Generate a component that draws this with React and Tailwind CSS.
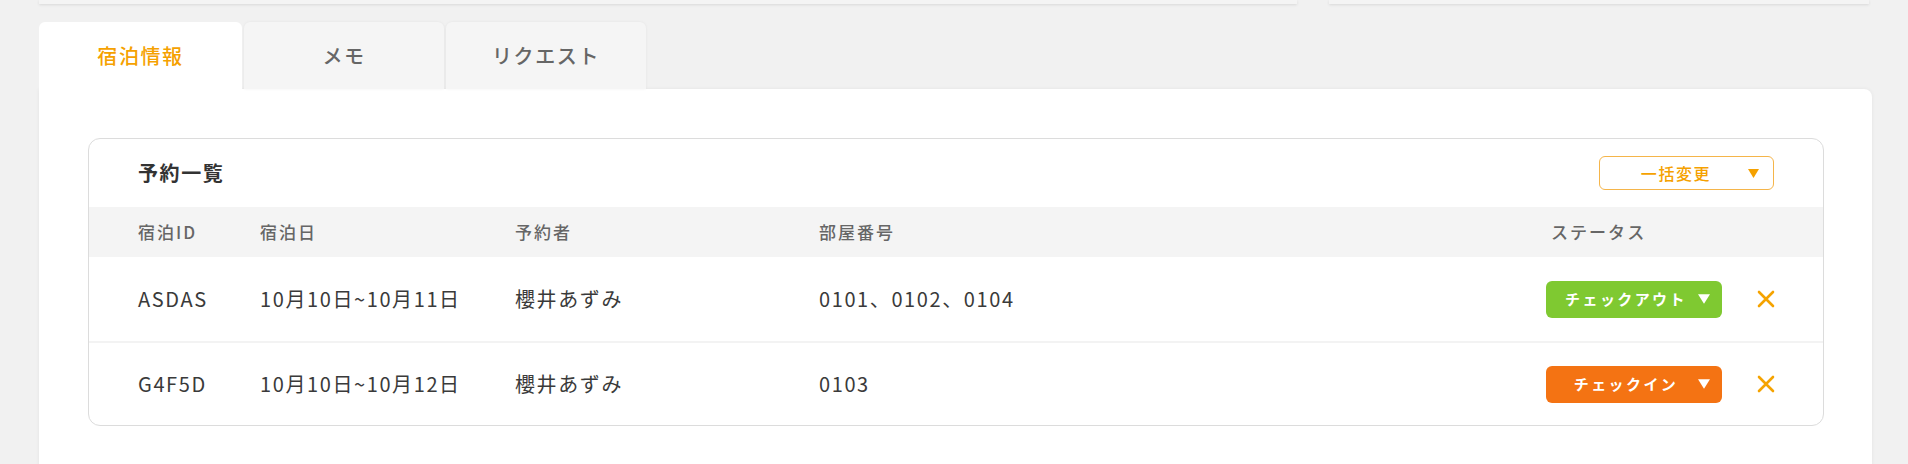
import React, { useState } from "react";

const tabs = ["宿泊情報", "メモ", "リクエスト"];

const reservations = [
  {
    id: "ASDAS",
    date: "10月10日~10月11日",
    guest: "櫻井あずみ",
    rooms: "0101、0102、0104",
    status: "checkout",
  },
  {
    id: "G4F5D",
    date: "10月10日~10月12日",
    guest: "櫻井あずみ",
    rooms: "0103",
    status: "checkin",
  },
];

const statusStyles = {
  checkout: { label: "チェックアウト", className: "bg-[#7fc931]" },
  checkin: { label: "チェックイン", className: "bg-[#f47313]" },
};

const Caret = ({ className }) => (
  <svg viewBox="0 0 10 8" className={className} fill="currentColor">
    <path d="M0 0h10L5 8z" />
  </svg>
);

const CloseIcon = () => (
  <svg viewBox="0 0 18 18" className="w-[18px] h-[18px] text-[#f5a300]">
    <path d="M2 2L16 16M16 2L2 16" stroke="currentColor" strokeWidth="2.6" strokeLinecap="round" />
  </svg>
);

const App = () => {
  const [activeTab, setActiveTab] = useState(0);
  const gridCols = "grid grid-cols-[122px_255px_304px_1fr_176px_101px] items-center pl-[49px]";

  return (
    <div
      className="min-h-screen bg-[#f1f1f1] text-[#333]"
      style={{ fontFamily: '"Noto Sans CJK JP", "Noto Sans", sans-serif' }}
    >
      {/* 上部のカード（切れている） */}
      <div className="flex gap-[32px] pl-[39px] pr-[39px]">
        <div className="w-[1258px] h-[4px] bg-[#f4f4f4] shadow-[0_1px_3px_rgba(0,0,0,0.1)]" />
        <div className="w-[540px] h-[4px] bg-[#f4f4f4] shadow-[0_1px_3px_rgba(0,0,0,0.1)]" />
      </div>

      <div className="pt-[18px] pl-[39px] pr-[36px]">
        {/* タブ */}
        <div className="flex gap-[2px]">
          {tabs.map((tab, i) => (
            <button
              key={tab}
              type="button"
              onClick={() => setActiveTab(i)}
              className={
                i === activeTab
                  ? "w-[203px] h-[67px] rounded-t-[6px] bg-white text-[#f5a100] text-[20px] font-medium tracking-[0.08em] flex items-center justify-center"
                  : "w-[200px] h-[67px] rounded-t-[6px] bg-[#f5f5f5] text-[#666] text-[20px] font-medium tracking-[0.08em] flex items-center justify-center shadow-[0_0_3px_rgba(0,0,0,0.06)]"
              }
            >
              {tab}
            </button>
          ))}
        </div>

        {/* パネル */}
        <div className="bg-white rounded-tr-[8px] pt-[49px] pl-[49px] pr-[48px] pb-[40px] shadow-[0_0_4px_rgba(0,0,0,0.06)]">
          <div className="border border-[#dcdcdc] rounded-[12px] overflow-hidden">
            <div className="h-[68px] flex items-center justify-between pl-[49px] pr-[49px]">
              <h2 className="text-[20px] font-bold tracking-[0.08em] text-[#333]">予約一覧</h2>
              <button
                type="button"
                className="w-[175px] h-[34px] border border-[#f5b54a] rounded-[6px] flex items-center text-[#f5a100] text-[16px] font-medium tracking-[0.1em]"
              >
                <span className="flex-1 text-center pl-[4px]">一括変更</span>
                <Caret className="w-[11px] h-[9px] mr-[14px]" />
              </button>
            </div>

            <div className={`${gridCols} h-[50px] bg-[#f4f4f4] text-[#666] text-[17px] font-medium tracking-[0.12em]`}>
              <div>宿泊ID</div>
              <div>宿泊日</div>
              <div>予約者</div>
              <div>部屋番号</div>
              <div className="pl-[5px]">ステータス</div>
              <div />
            </div>

            {reservations.map((r, i) => {
              const s = statusStyles[r.status];
              return (
                <div
                  key={r.id}
                  className={`${gridCols} h-[84px] text-[20px] tracking-[0.08em] text-[#3a3a3a] ${
                    i > 0 ? "border-t-2 border-[#f3f3f3]" : ""
                  }`}
                >
                  <div>{r.id}</div>
                  <div>{r.date}</div>
                  <div>{r.guest}</div>
                  <div>{r.rooms}</div>
                  <button
                    type="button"
                    className={`${s.className} h-[37px] rounded-[6px] flex items-center text-white text-[15px] font-bold tracking-[0.16em]`}
                  >
                    <span className="flex-1 text-center pl-[8px]">{s.label}</span>
                    <Caret className="w-[12px] h-[10px] mr-[12px]" />
                  </button>
                  <div className="pl-[35px] flex items-center">
                    <CloseIcon />
                  </div>
                </div>
              );
            })}
          </div>
        </div>
      </div>
    </div>
  );
};

export default App;
